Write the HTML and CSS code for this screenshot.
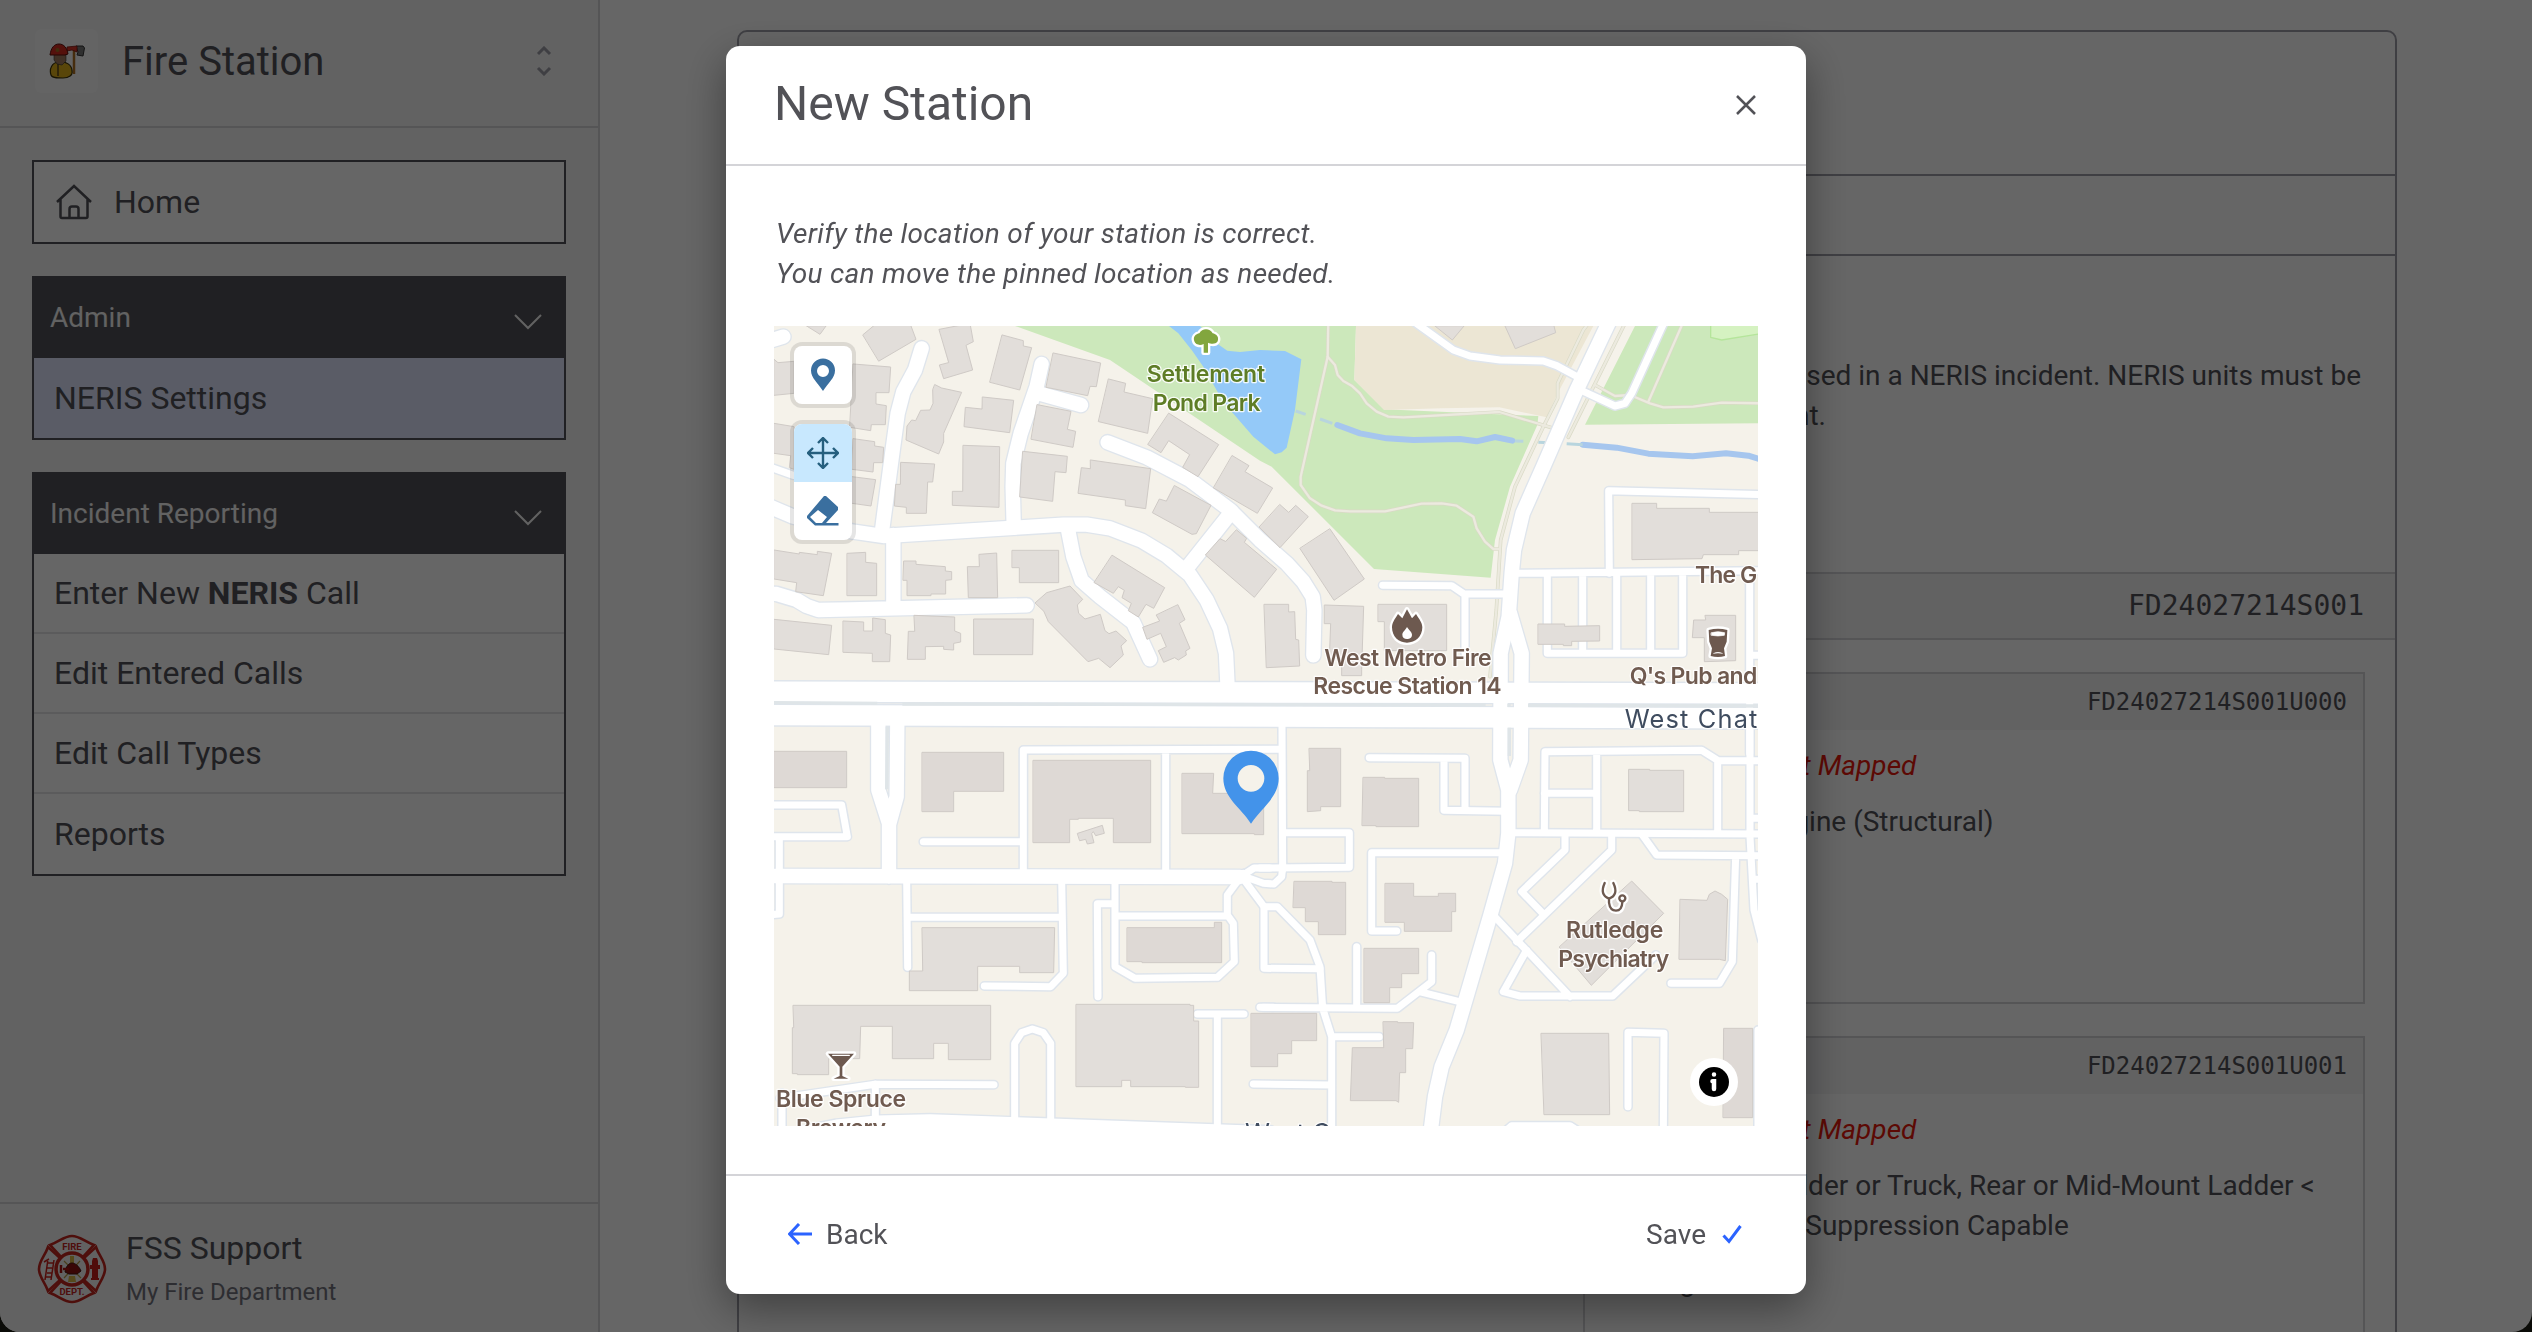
FILE: index.html
```html
<!DOCTYPE html>
<html lang="en">
<head>
  <meta charset="UTF-8" />
  <meta name="viewport" content="width=device-width, initial-scale=1.0" />
  <title>Fire Station - NERIS Settings</title>
  <link rel="stylesheet" href="styles.css">
</head>
<body>

  <div class="app">
    <aside class="sidebar">
      <div class="brand">
        <div class="brand-logo">
          <svg width="36" height="36" viewBox="0 0 36 36">
            <path d="M25 6v25" stroke="#b07024" stroke-width="2.500" />
            <path d="M27 3h7l1.500 2-1.500 8-6-1 1-3z" fill="#777" stroke="#333" />
            <path d="M18 4l10-1v6l-5-2-5 1z" fill="#d8362a" stroke="#7c150f" stroke-width=".8" />
            <path d="M2 32c-2-6 1-13 8-13 7-1 13 3 13 9 1 4-3 7-9 7-6 0-11 0-12-3z" fill="#dfb01a" stroke="#3d3208" stroke-width="1.200" />
            <path d="M9 19v14" stroke="#44351a" stroke-width="1.300" />
            <path d="M5 11h12v7l-4 4-5-1-3-4z" fill="#a47a60" stroke="#333" stroke-width=".6" />
            <path d="M1 12C2 5 5 1 10 1s8 4 9 10l-3 1H6z" fill="#d32c20" stroke="#5c100b" />
            <circle cx="8.500" cy="7" r="2" fill="#a06f22" />
          </svg>
        </div>
        <span class="brand-name">Fire Station</span>
        <svg class="sorter" width="16" height="30" viewBox="0 0 16 30"><path d="M2 8l6-6 6 6M2 22l6 6 6-6" /></svg>
      </div>

      <nav class="nav">
        <a class="home">
          <svg width="36" height="36" viewBox="0 0 36 36"><path d="M1 18L18 2l17 16M4.500 15.500v17a1.500 1.500 0 0 0 1.500 1.500h24a1.500 1.500 0 0 0 1.500-1.500v-17M13.500 34V25a2.500 2.500 0 0 1 2.500-2.500h4a2.500 2.500 0 0 1 2.500 2.500v9" /></svg>
          Home
        </a>

        <div class="group">
          <div class="group-title">Admin <svg width="28" height="16" viewBox="0 0 28 16"><path d="M1 1l13 13L27 1" /></svg></div>
          <a class="item selected">NERIS Settings</a>
        </div>

        <div class="group">
          <div class="group-title">Incident Reporting <svg width="28" height="16" viewBox="0 0 28 16"><path d="M1 1l13 13L27 1" /></svg></div>
          <a class="item"><span>Enter New <b>NERIS</b> Call</span></a>
          <a class="item">Edit Entered Calls</a>
          <a class="item">Edit Call Types</a>
          <a class="item">Reports</a>
        </div>
      </nav>

      <div class="account">
        <svg width="72" height="70" viewBox="0 0 72 70">
          <defs>
            <path id="lobe" d="M14 11C23 8 28 2 36 2s13 6 22 9L47 23A16 16 0 0 0 25 23z" />
          </defs>
          <g class="badge">
            <use href="#lobe" />
            <use href="#lobe" transform="rotate(90 36 35)" />
            <use href="#lobe" transform="rotate(180 36 35)" />
            <use href="#lobe" transform="rotate(270 36 35)" />
            <circle cx="36" cy="35" r="15.500" />
          </g>
          <path d="M28 27l17 17M44 27L28 44" stroke="#b89d45" stroke-width="1.200" />
          <path d="M34 22h4v9h-4zM33 42h6l1 6h-8z" fill="#d9b84a" />
          <path d="M29 38c1-6 4-9 7-9s7 3 9 8l-4 3h-8z" fill="#8e130f" stroke="#4a1411" />
          <path d="M25 31v8M27 35h6" stroke="#a9130f" stroke-width="2.500" />
          <path d="M57 24h4l1 3v4h2v4h-2v9h1v2h-8v-2h1v-9h-2v-4h2v-4z" fill="#c9201b" />
          <path d="M12 25L9 46M18 26l-3 20M12 29h5M11 34h5M11 39h5M10 43h5M8 28l5-3" stroke="#c9201b" stroke-width="1.500" />
          <text x="36" y="15.500" class="badge-text">FIRE</text>
          <text x="36" y="61" class="badge-text">DEPT.</text>
        </svg>
        <div>
          <div class="account-name">FSS Support</div>
          <div class="account-org">My Fire Department</div>
        </div>
      </div>
    </aside>

    <main class="main">
      <section class="panel">
        <div class="panel-head"></div>
        <div class="panel-tabs"></div>
        <div class="panel-intro">
          <p>Stations and units that can be used in a NERIS incident. NERIS units must be</p>
          <p class="intro-end">mapped to be in an incident.</p>
        </div>
        <div class="station-bar">FD24027214S001</div>
        <div class="units">
          <article class="unit">
            <header>FD24027214S001U000</header>
            <dl>
              <dt>Status</dt><dd class="unmapped">Not Mapped</dd>
              <dt>Type</dt><dd class="engine">Engine (Structural)</dd>
            </dl>
          </article>
          <article class="unit">
            <header>FD24027214S001U001</header>
            <dl>
              <dt>Status</dt><dd class="unmapped">Not Mapped</dd>
              <dt>Type</dt><dd class="ladder">Ladder or Truck, Rear or Mid-Mount Ladder &lt;<br><span class="capable">Fire Suppression Capable</span></dd>
              <dt>Staffing</dt><dd>4</dd>
            </dl>
          </article>
        </div>
      </section>
    </main>
  </div>

  <div class="overlay">
    <div class="modal">
      <header class="modal-head">
        <h2>New Station</h2>
        <svg width="22" height="22" viewBox="0 0 22 22"><path d="M2 2l18 18M20 2L2 20" /></svg>
      </header>

      <div class="modal-body">
        <p>Verify the location of your station is correct.<br>You can move the pinned location as needed.</p>

        <div class="map">
          <svg class="map-canvas" viewBox="0 0 2952 2400">
            <defs>
              <g id="streets">
                <g transform="translate(-12 -18)">
                  <path d="M455 85L435 150 400 215 383 280 368 390 335 640" />
                  <path d="M0 560L70 590 180 620 250 635 340 648 880 614 950 614 1020 625 1115 662 1190 707 1260 765 1310 840 1350 925 1368 1000 1373 1105" />
                  <path d="M370 645V865M-10 820L20 822 80 840 110 858 145 870 240 868 770 856" />
                  <path d="M815 132L800 200 752 340 730 430 728 500 731 612M798 218L933 255" />
                  <path d="M1013 367L1130 412 1260 480 1380 570 1470 660 1550 730 1600 785 1628 830 1633 870 1630 1006" />
                  <path d="M1385 575L1258 735M892 618L910 710 935 782 990 830 1090 908 1140 1018M0 62L40 50" />
                  <path d="M2520 0L2420 210 2320 440 2258 580 2232 690 2225 760 2216 890 2192 1000 2191 1320 2215 1410V1540L2205 1630 2160 1790 2110 1960 2060 2130 2015 2240 1995 2330 1980 2450" />
                  <path d="M2220 880L2255 1000 2252 1320 2220 1410" />
                  <path d="M325 1200V1410L357 1510V1670M382 1200L380 1430 358 1510M-10 1668L1410 1671" />
                  <path d="M0 2460L200 2420 320 2408 480 2404 1500 2440" />
                </g>
              </g>
              <g id="boulevard">
                <path d="M-40 1097L3000 1102M-40 1167L3000 1177" />
              </g>
              <g id="drives">
                <g transform="translate(-12 -18)">
                  <path d="M-10 438L70 466" />
                </g>
                <g transform="translate(1458 -18)">
                  <path d="M455 0L580 90 630 108 720 120 850 123 890 137 970 180M970 214L1065 258 1095 250 1115 220 1220 -10" />
                  <path d="M368 796L575 797 612 822H740M615 822V1000M770 760L1500 752M862 760V1000H1268V760M968 760V1000M1070 760V1000M1172 760V1000" />
                  <path d="M1048 760L1046 512 1510 524M1469 760V1300M1469 1006H1510" />
                </g>
                <g transform="translate(-12 1152)">
                  <path d="M0 285H215L232 380H0M28 380V612L0 614M460 395H760M760 500V120L1535 118M1187 120V500M410 510L413 772M412 622H875M875 510L880 790 842 830 643 828" />
                  <path d="M1035 510V770L1095 805 1342 802 1393 755 1390 640 1372 615V555L1420 490M1035 618L1372 617M1035 581H982L984 860M1282 912H1422M1342 912V1270" />
                  <path d="M734 1230V1000L755 968 787 957 820 968 842 1000V1230M30 1165L315 1123 672 1124M316 1123V1230M36 1150V1270" />
                  <path d="M1420 495L1452 474 1500 474M1425 500L1480 520 1512 522 1535 500 1538 470M1415 500L1482 590V775L1650 776M1479 892H1510" />
                </g>
                <g transform="translate(1458 1152)">
                  <path d="M66 50L68 480M68 368H268V472L0 474M328 143L615 145V300M552 145V301L740 304M730 428H335V663H410" />
                  <path d="M12 590H52L150 690 180 770 188 895 215 980V1270M0 892L412 895 515 815V735M478 845L610 878M290 710V890M215 980H358M-20 1122L215 1125" />
                  <path d="M750 368L1510 372M853 368L855 125 1325 121 1375 152H1510M853 250H1010M1010 125V368M1373 152V372M1470 40V380L1482 600 1505 690M915 372V420L785 545 850 612M1055 372V420L770 695" />
                  <path d="M695 610L930 860M800 720L730 845 780 858H1058L1188 735M1145 372L1190 435 1510 437M1427 437L1417 755 1378 820H1233M1104 1190V967L1212 970 1210 1270M740 1260L755 1247H930L950 1260M1478 325H1510M1484 508H1510M1494 960V1270" />
                </g>
              </g>
              <g id="trails" transform="translate(1458 -18)">
                <path d="M205 0L203 110 122 470V495L150 535 185 557 225 571 270 574H375L485 551 545 550 590 557 640 590 650 625 675 665 700 687H718" />
                <path d="M203 110L225 135 233 165 250 183 275 197 300 220 320 250 350 275 385 290 430 292 718 276 875 323" />
                <path d="M985 10L970 30 893 190V235L850 320 765 500 722 660 709 870 690 1070M1100 0L925 352M1005 195L1065 228 1110 225 1170 250 1210 262 1300 260 1385 248 1510 250M1268 10L1165 245" />
              </g>
            </defs>

            <!-- land cover -->
            <g transform="translate(1458 -18)">
              <path class="park" d="M-735 18L-450 120 0 422 35 440 342 747 692 773 705 660 750 500 832 315 835 288 372 268 283 180 288 18zM1125 18L975 314 1500 310V18z" />
              <path class="sand" d="M288 18L283 180 372 270 545 265 718 262 860 292 893 220 930 150 1000 18z" />
              <path class="pitch" d="M1352 10V52L1385 60 1510 40V10z" />
              <path class="water" d="M-273 18L-245 40-205 90-170 140-125 220-85 275-20 350 45 403 65 397 80 383 105 270 124 118 75 93 0 90-60 96-98 92-130 70-180 18z" />
              <path class="creek" d="M232 315L300 340 380 355 460 360 600 357 650 364 705 351 757 362M968 374L1070 383 1165 401 1298 409 1398 400 1465 407 1500 418" />
              <path class="creek-thin" d="M107 273L137 283M180 297L217 310M765 363L790 364M835 367L865 368M920 371L968 374" />
            </g>
            <use href="#trails" class="trail-casing" />
            <use href="#trails" class="trail" />

            <use href="#drives" class="drive-casing" />
            <use href="#streets" class="street-casing" />
            <use href="#boulevard" class="boulevard-casing" />
            <use href="#drives" class="drive" />
            <use href="#streets" class="street" />
            <use href="#boulevard" class="boulevard" />
            <path class="median" d="M0 1130L310 1132M385 1134L2135 1137M2200 1138H2210M2262 1138L2952 1140M340 1202L338 1390M2206 1205V1290" />

            <!-- buildings -->
            <g class="buildings">
              <g transform="translate(-12 -18)">
                <path d="M110 18L150 43 168 18zM279 44L320 10H420L438 58 327 123zM508 28L600 10 610 65 588 76 608 150 521 176 508 135 535 128z" />
                <path d="M12 118L24 128 72 124V220L12 226zM250 132L362 141 357 218H318V252L349 257 346 314H304L302 332 240 322zM12 310L72 320V448L58 443 62 407 12 400zM250 356L314 365V378L341 382 338 428H311L309 456 246 448zM246 470L317 479 303 558 246 550z" />
                <path d="M697 45L760 62V78L785 83 749 210 660 187zM850 99L992 129 979 200 960 199 953 227 829 202zM495 194L515 204 575 217 521 340V366L506 402 408 360 411 318 425 300 437 302 452 271 480 270 489 250 488 210zM638 231L731 241 719 338 582 320 586 262 635 267zM802 254L903 274 892 328 917 334 909 382 784 358zM1016 177L1067 190 1062 216 1148 236 1133 340 986 305z" />
                <path d="M580 376L689 380 687 562 547 556V514H577zM393 427L494 432 488 486H473L469 580H409V562L373 558 377 493H390zM759 394L892 409 888 458 855 455 848 544 750 531zM962 420L1142 446 1127 566 1066 557V540L924 520 934 443 960 446zM1197 280L1346 374 1284 470 1238 442 1259 404 1196 362 1173 398 1134 374zM1387 407L1437 437 1425 455 1508 504 1462 580 1331 504zM1214 497L1323 556 1279 641 1266 643 1147 578 1168 537 1188 543z" />
                <path d="M12 690L88 702V697L142 704V694L185 700 160 827 77 815 80 788 12 777zM232 700L287 697V727L320 730V827H232zM402 723H438V733L526 740V753L545 755V779L527 781V822H483V827H411V781H400zM628 703L680 699 683 833H595L592 740H627zM727 691H866V788H748V743H727zM1027 706L1184 803 1151 865 1128 853 1105 891 1075 872 1084 850 1056 833 1063 811 1045 800 1030 820 973 788z" />
                <path d="M12 898L185 916 176 1004 12 987zM220 903L281 906V933H308V894L346 899V940L362 945 359 1025H307V1000L220 997zM433 886L554 891V933L572 940V966L551 970V990L521 988V979L466 980V1018H412L415 934H433zM612 897H790L788 1004H612zM796 848L830 818 900 798 938 838 922 855 926 880 945 897 991 883 1005 932 1017 941 1038 933 1070 962 1053 978 1060 1005 1020 1043 986 1015 954 1025 835 905 822 875zM1224 855L1245 899 1228 910 1260 985 1247 993 1249 1005 1225 1020 1214 1013 1181 1027 1165 992 1189 980 1172 940 1131 958 1118 922 1169 903 1159 886zM1400 630L1430 655 1423 667 1520 748 1453 832 1306 705 1350 656 1366 664zM1483 853H1556V876L1574 875 1577 958 1586 960 1589 1038 1490 1043z" />
                <path d="M1530 554L1556 577 1577 556 1615 590 1530 683 1468 622zM1680 627L1783 777 1692 841 1590 686zM1664 855L1781 859 1775 1048 1775 1067H1715V1015H1678L1682 911H1664z" />
              </g>
              <g transform="translate(1458 -18)">
                <path d="M525 18L577 60 612 18zM735 18L766 86 887 38 882 18zM355 853H560V992H373V905H355zM1117 550H1190V565H1348V577H1500V692H1436V704H1330L1326 716 1117 719zM835 912H914V919L1019 917V963L935 964V977H910V973H835zM1336 886H1427V1022L1333 1025V953H1297L1301 900H1336z" />
              </g>
              <g class="dark" transform="translate(-12 1152)">
                <path d="M12 124H230V233H12zM457 127H701V244H551V305H457zM790 151H1142V398H1030V325H925V328H899V398H790zM1237 190H1331L1328 250H1481V374H1453V371H1237zM1072 653H1333V637H1355V758H1116V755H1072z" />
                <path class="light" d="M457 653H854L851 788H749V769H623V842H418V783H457zM70 886H662V1049H535V1000H491V1046H367V949H272L269 1046H176V1094H82V1091H67V953H70zM919 883H1260V886H1271V933H1286V1132H1246V1130H1082V1111H1055V1130H919zM923 370L997 346 1003 370 977 377 970 365 965 371 972 398 952 402 947 388 930 392z" />
                <path d="M1444 910H1640V992H1565V1031H1523V1070H1444z" />
              </g>
              <g class="dark" transform="translate(1458 1152)">
                <path d="M148 115H242V290H182V302L142 305V182H148zM310 202H374V205H476V350H348V347H307zM103 514H216V517H257V674H175V635H136V593H100zM376 520H461V559H535V550H587V605H575V664H433V637H376zM313 715H476V791H425V833H389V878H313zM370 935H413V938H461L458 1016H437V1088H419L416 1177 408 1172H271L277 1013H370z" />
                <path class="light" d="M1107 178H1169V181H1271V305H1138V302H1107zM844 970H1046L1049 1214H853zM1116 514L1211 610 994 826 898 712zM1261 568L1341 571 1348 553 1365 543 1385 553 1403 568 1396 752 1378 748H1258z" />
                <path d="M1392 955H1478V1223H1390z" />
              </g>
            </g>

            <!-- points of interest -->
            <g class="poi-icon" transform="translate(1296 18)">
              <path class="leaf" d="M-35 28C-40 14-30 6-20 4-12-12 12-12 20 4 30 6 40 14 35 28 28 38 15 36 6 32L6 62H-7V36C-18 42-32 38-35 28z" />
            </g>
            <g class="poi-icon" transform="translate(1458 -18)">
              <path d="M441 868L456 895 468 882C478 898 487 908 487 922 487 950 466 968 441 968S396 950 396 922C396 908 404 898 414 882L427 895z" />
              <path class="cut" d="M441 921C446 930 456 936 456 944 456 953 449 957 441 957S427 953 427 944C427 936 437 930 441 921z" />
              <path d="M1346 930Q1374 922 1402 930L1400 965 1392 985 1395 1008Q1374 1014 1352 1008L1356 985 1348 965z" />
              <path class="cut thin" d="M1354 938Q1374 932 1394 938L1393 946Q1374 950 1354 946zM1361 1000Q1374 994 1387 1000" />
            </g>
            <g class="poi-icon" transform="translate(-12 1152)">
              <path d="M174 1031H252L217 1070V1098L235 1106H191L209 1098V1070z" />
              <path class="cut-line" d="M188 1036H238" />
            </g>
            <g class="steth" transform="translate(1458 1152)">
              <path class="steth-halo" d="M1034 519Q1018 555 1047 566 1077 555 1060 519M1047 566V578Q1050 602 1068 602 1086 602 1087 576" />
              <circle class="steth-halo" cx="1087" cy="565" r="9" />
              <path d="M1034 519Q1018 555 1047 566 1077 555 1060 519M1047 566V578Q1050 602 1068 602 1086 602 1087 576" />
              <circle cx="1087" cy="565" r="9" />
            </g>

            <g class="labels">
              <text class="park-label" x="1118" y="169" textLength="355">Settlement</text>
              <text class="park-label" x="1136" y="254" textLength="324">Pond Park</text>
              <text x="1651" y="1019" textLength="502">West Metro Fire</text>
              <text x="1618" y="1105" textLength="565">Rescue Station 14</text>
              <text x="2763" y="772" textLength="187">The G</text>
              <text x="2567" y="1074" textLength="383">Q's Pub and</text>
              <text x="2376" y="1837" textLength="292">Rutledge</text>
              <text x="2353" y="1922" textLength="333">Psychiatry</text>
              <text x="6" y="2344" textLength="390">Blue Spruce</text>
              <text x="66" y="2430" textLength="270">Brewery</text>
              <text class="road-label" x="2552" y="1207" textLength="398">West Chat</text>
              <text class="road-label" x="1413" y="2447">West C</text>
            </g>

            <path class="pin" fill-rule="evenodd" d="M1431 1493C1400 1445 1348 1415 1348 1357A83 83 0 0 1 1514 1357C1514 1415 1462 1445 1431 1493zM1431 1317A40 40 0 1 0 1431 1397A40 40 0 1 0 1431 1317z" />
          </svg>

          <div class="map-tools">
            <div class="tool-group">
              <button type="button"><svg width="26" height="34" viewBox="0 0 26 34"><path fill-rule="evenodd" d="M13 33C8 25 1 20 1 12.500a12 12 0 0 1 24 0C25 20 18 25 13 33zM13 7a6 6 0 1 0 0 12 6 6 0 0 0 0-12z" /></svg></button>
            </div>
            <div class="tool-group">
              <button type="button" class="active"><svg width="32" height="32" viewBox="0 0 32 32"><path class="stroke" d="M16 2v28M2 16h28M11 6l5-5 5 5M11 26l5 5 5-5M6 11l-5 5 5 5M26 11l5 5-5 5" /></svg></button>
              <button type="button"><svg width="32" height="32" viewBox="0 0 32 32"><path fill-rule="evenodd" d="M19 1l12 11v3L19 28h12.500v2.500H8L0 23v-2L17 1zM11 15l-8 7 6 6h6l5-6z" /></svg></button>
            </div>
          </div>
          <button type="button" class="map-info"><svg width="30" height="30" viewBox="0 0 30 30"><circle cx="15" cy="15" r="15" /><path d="M15 7.500v.100M13.500 14.200H15V22" /></svg></button>
        </div>
      </div>

      <footer class="modal-foot">
        <button type="button"><svg width="25" height="22" viewBox="0 0 25 22"><path d="M24 11H2M11 1L1.500 11 11 21" /></svg>Back</button>
        <button type="button">Save<svg width="20" height="20" viewBox="0 0 20 20"><path d="M1.500 11.500L7 17.500 18.500 2" /></svg></button>
      </footer>
    </div>
  </div>

</body>
</html>
```
FILE: styles.css
```css
* {
  box-sizing: border-box;
}

body {
  margin: 0;
  height: 1332px;
  overflow: hidden;
  background-color: #1c1e14;
  color: #525257;
  font-family: Roboto, "Liberation Sans", sans-serif;
  font-size: 28px;
}

p, h2, dl, dd {
  margin: 0;
}

button {
  padding: 0;
  border: none;
  background: none;
  color: inherit;
  font: inherit;
}

svg {
  flex: none;
  fill: none;
}

.app {
  display: flex;
  height: 1332px;
  background-color: #fff;
  border-radius: 0 0 20px 20px;
  overflow: hidden;
}

/* sidebar */

.sidebar {
  display: flex;
  flex-direction: column;
  width: 600px;
  background-color: #f4f4f5;
  border-right: 2px solid #d4d4d8;
}

.brand {
  display: flex;
  align-items: center;
  height: 128px;
  padding: 0 46px 4px 35px;
  border-bottom: 2px solid #d4d4d8;
}

.brand-logo {
  display: flex;
  align-items: center;
  justify-content: center;
  width: 63px;
  height: 64px;
  margin-right: 24px;
  border-radius: 6px;
  background-color: #fafafa;
}

.brand-name {
  flex: 1;
  font-size: 40px;
}

.sorter {
  stroke: #9f9fa9;
  stroke-width: 3;
}

.nav {
  display: flex;
  flex-direction: column;
  gap: 32px;
  flex: 1;
  padding: 32px;
  font-size: 32px;
}

.home {
  display: flex;
  align-items: center;
  gap: 22px;
  height: 84px;
  padding-left: 22px;
  border: 2px solid #525257;
  background-color: #fff;
}

.home svg {
  stroke: #525257;
  stroke-width: 2.5;
}

.group {
  border: 2px solid #525257;
  background-color: #fff;
}

.group-title {
  display: flex;
  align-items: center;
  justify-content: space-between;
  height: 80px;
  padding: 0 22px 2px 16px;
  background-color: #525257;
  color: #f4f4f5;
  font-size: 28px;
}

.group-title svg {
  margin-top: 10px;
  stroke: #f4f4f5;
  stroke-width: 2;
}

.item {
  display: flex;
  align-items: center;
  height: 80px;
  padding-left: 20px;
  border-bottom: 2px solid #e4e4e7;
}

.item:last-child {
  border-bottom: none;
}

.item.selected {
  background-color: #e0e7ff;
}

.account {
  display: flex;
  align-items: center;
  gap: 18px;
  height: 130px;
  padding: 2px 36px 0;
  border-top: 2px solid #d4d4d8;
}

.account-name {
  font-size: 32px;
  line-height: 46px;
}

.account-org {
  color: #71717b;
  font-size: 24px;
  line-height: 42px;
}

.badge {
  stroke: #c4261f;
  stroke-width: 2.6;
}

.badge-text {
  fill: #c4261f;
  font-size: 9.5px;
  font-weight: bold;
  text-anchor: middle;
}

/* page behind the dialog */

.main {
  flex: 1;
  padding: 30px 135px 0 137px;
}

.panel {
  height: 1400px;
  border: 2px solid #9f9fa9;
  border-radius: 10px;
}

.panel-head {
  height: 144px;
  border-bottom: 2px solid #9f9fa9;
}

.panel-tabs {
  height: 80px;
  border-bottom: 2px solid #9f9fa9;
}

.panel-intro {
  height: 316px;
  padding: 100px 34px 0;
  line-height: 40px;
  text-align: right;
}

.intro-end {
  padding-right: 535px;
}

.station-bar {
  height: 68px;
  padding-right: 31px;
  border-top: 2px solid #d4d4d8;
  border-bottom: 2px solid #d4d4d8;
  background-color: #f4f4f5;
  font-family: "DejaVu Sans Mono", monospace;
  line-height: 64px;
  text-align: right;
}

.units {
  display: flex;
  flex-direction: column;
  gap: 32px;
  width: 812px;
  margin-left: auto;
  padding: 32px 30px 0 0;
}

.unit {
  height: 332px;
  border: 2px solid #d4d4d8;
}

.unit header {
  height: 56px;
  padding-right: 16px;
  background-color: #f4f4f5;
  font-family: "DejaVu Sans Mono", monospace;
  font-size: 24px;
  line-height: 56px;
  text-align: right;
}

.unit dl {
  display: grid;
  grid-template-columns: 160px 1fr;
  row-gap: 16px;
  padding: 16px 20px 0 14px;
  line-height: 40px;
  white-space: nowrap;
}

.unmapped {
  padding-left: 8px;
  color: #e7180b;
  font-style: italic;
}

.engine,
.ladder {
  padding-left: 3px;
}

.capable {
  margin-left: -10px;
}

/* dialog */

.overlay {
  position: fixed;
  inset: 0;
  display: flex;
  align-items: flex-start;
  justify-content: center;
  padding-top: 46px;
  background-color: rgba(0, 0, 0, 0.6);
}

.modal {
  width: 1080px;
  height: 1248px;
  border-radius: 14px;
  background-color: #fff;
  box-shadow: 0 14px 44px rgba(0, 0, 0, 0.4);
}

.modal-head {
  display: flex;
  align-items: center;
  justify-content: space-between;
  height: 120px;
  padding: 0 49px 0 48px;
  border-bottom: 2px solid #d4d4d8;
}

.modal-head h2 {
  padding-bottom: 3px;
  font-size: 48px;
  font-weight: 400;
}

.modal-head svg {
  stroke: #525257;
  stroke-width: 2.5;
}

.modal-body {
  height: 1008px;
  padding: 48px 48px 0;
}

.modal-body p {
  padding-left: 2px;
  margin-bottom: 32px;
  font-style: italic;
  letter-spacing: 0.31px;
  line-height: 40px;
}

.modal-foot {
  display: flex;
  align-items: center;
  justify-content: space-between;
  height: 120px;
  padding: 0 64px 2px 62px;
  border-top: 2px solid #d4d4d8;
}

.modal-foot button {
  display: flex;
  align-items: center;
  gap: 13px;
}

.modal-foot button:last-child {
  gap: 16px;
}

.modal-foot svg {
  stroke: #2b63ff;
  stroke-width: 3;
}

/* map */

.map {
  position: relative;
  width: 984px;
  height: 800px;
  overflow: hidden;
  background-color: #f5f2ea;
}

.map-canvas {
  display: block;
  width: 984px;
  height: 800px;
  stroke-linejoin: round;
  stroke-linecap: round;
}

.park { fill: #cce8bb; }
.sand { fill: #ece6d4; }
.pitch { fill: #d5f2c1; stroke: #b5e59b; stroke-width: 4; }
.water { fill: #94c9f8; }
.creek { stroke: #a6c6ee; stroke-width: 18; }
.creek-thin { stroke: #b8d5de; stroke-width: 9; stroke-linecap: butt; }

.trail-casing { stroke: #d9dac6; stroke-width: 11; }
.trail { stroke: #eceadf; stroke-width: 7; }

.drive-casing { stroke: #dfe5ec; stroke-width: 30; }
.drive { stroke: #fff; stroke-width: 21; }
.street-casing { stroke: #dfe5ec; stroke-width: 51; }
.street { stroke: #fff; stroke-width: 43; }
.boulevard-casing { stroke: #dfe5ec; stroke-width: 70; }
.boulevard { stroke: #fff; stroke-width: 61; }
.median { stroke: #dfe5e8; stroke-width: 10; stroke-linecap: butt; }

.buildings {
  fill: #e2deda;
  stroke: #cfcac6;
  stroke-width: 3;
  stroke-linejoin: miter;
}

.buildings .dark { fill: #ded9d5; }
.buildings .light { fill: #e2deda; }

.poi-icon path {
  fill: #6d594f;
  stroke: #fff;
  stroke-width: 14;
  paint-order: stroke;
}

.poi-icon .leaf { fill: #82a63e; }
.poi-icon .cut { fill: #fff; stroke: none; }
.poi-icon .thin { stroke: #fff; stroke-width: 2; }
.poi-icon .cut-line { stroke: #fff; stroke-width: 4; }

.steth {
  stroke: #6d594f;
  stroke-width: 7;
}

.steth .steth-halo {
  stroke: #fff;
  stroke-width: 20;
}

.labels text {
  fill: #705b50;
  stroke: #fff;
  stroke-width: 8;
  stroke-opacity: 0.85;
  paint-order: stroke;
  font-family: Inter, "Liberation Sans", sans-serif;
  font-size: 69px;
  font-weight: 600;
}

.labels .park-label { fill: #5e7d26; }

.labels .road-label {
  fill: #3f4c5f;
  font-size: 76px;
  font-weight: 400;
}

.pin { fill: #4393ea; }

.map-tools {
  position: absolute;
  top: 20px;
  left: 20px;
  display: flex;
  flex-direction: column;
  gap: 20px;
}

.tool-group {
  border-radius: 8px;
  background-color: #fff;
  box-shadow: 0 0 0 4px rgba(0, 0, 0, 0.1);
  overflow: hidden;
}

.tool-group button {
  display: flex;
  align-items: center;
  justify-content: center;
  width: 58px;
  height: 58px;
}

.tool-group svg { fill: #3a6f9f; }
.tool-group .active { background-color: #c8e8fe; }
.tool-group .stroke { fill: none; stroke: #265f7e; stroke-width: 2.4; }

.map-info {
  position: absolute;
  right: 20px;
  bottom: 20px;
  display: flex;
  align-items: center;
  justify-content: center;
  width: 48px;
  height: 48px;
  border-radius: 50%;
  background-color: #fff;
}

.map-info circle { fill: #000; }
.map-info path { stroke: #fff; stroke-width: 4.5; stroke-linecap: round; }
```
